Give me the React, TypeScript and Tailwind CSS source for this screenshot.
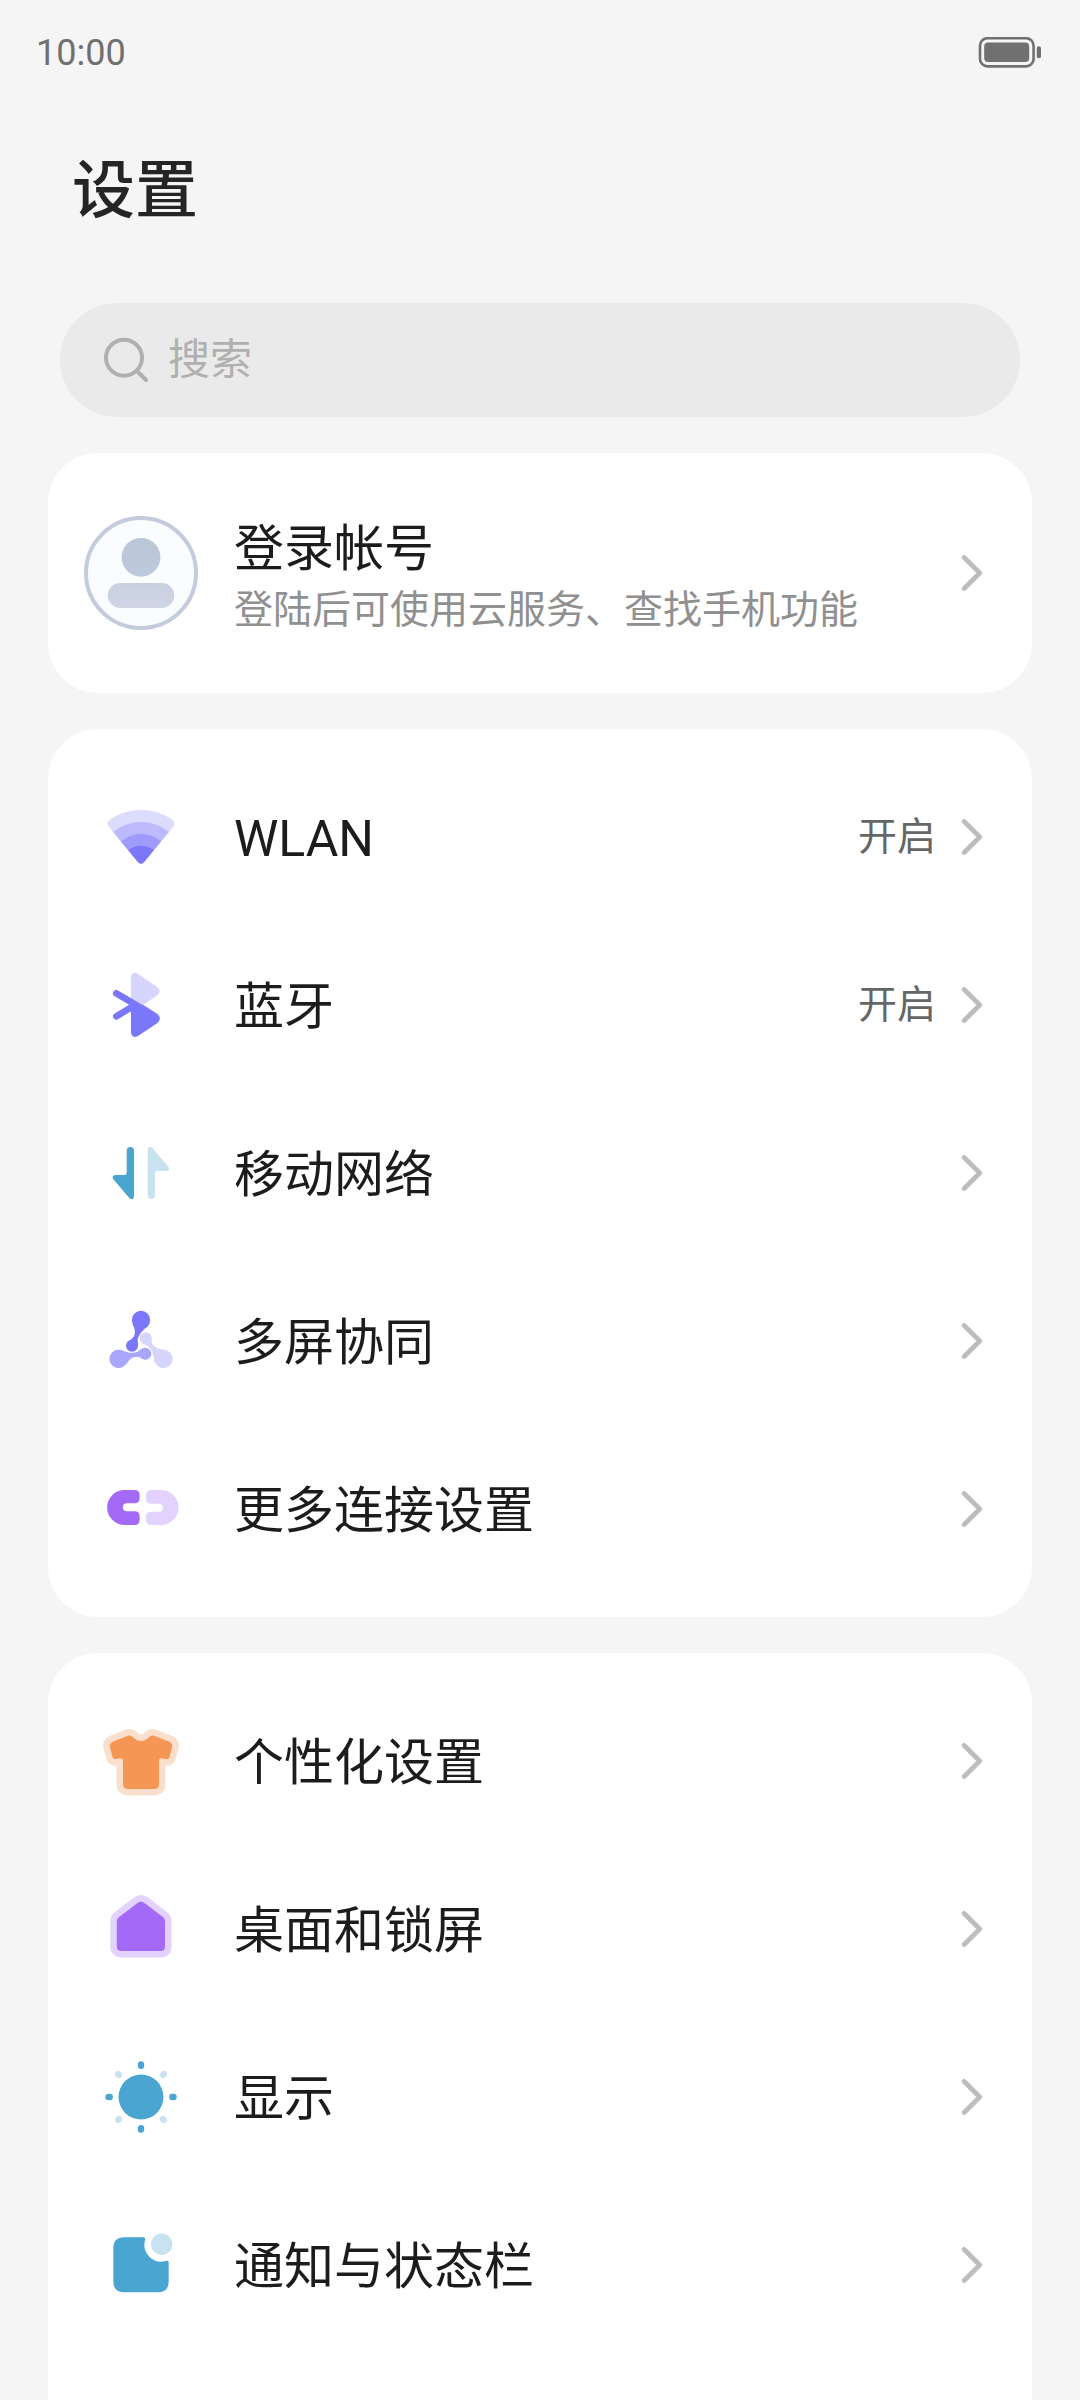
import type { ReactNode } from "react";

const iconClass = "size-[84px]";

function WlanIcon() {
  return (
    <svg viewBox="0 0 84 84" className={iconClass} aria-hidden="true">
      <clipPath id="wlan-fan">
        <path d="M45 66.9 Q42 70 39 66.9 L9.4 31.3 Q7 27.6 10.8 24.5 A55.5 55.5 0 0 1 73.2 24.5 Q77 27.6 74.6 31.3 Z" />
      </clipPath>
      <g clipPath="url(#wlan-fan)">
        <circle cx="42" cy="70.5" r="56" fill="#dcdcff" />
        <circle cx="42" cy="70.5" r="43.5" fill="#bcbafc" />
        <circle cx="42" cy="70.5" r="31.5" fill="#9e9bfb" />
        <circle cx="42" cy="70.5" r="19.8" fill="#7a77fb" />
      </g>
    </svg>
  );
}

function BluetoothIcon() {
  return (
    <svg viewBox="0 0 84 84" className={iconClass} aria-hidden="true">
      <path
        d="M32 14.5 Q32.5 7.5 39 10.8 L58.5 24.3 Q63 28.3 58.5 32 L44.3 42 L32 36 Z"
        fill="#d6d5fe"
      />
      <path
        d="M32 41 L44.3 42.1 L58.5 51 Q63.2 55.5 58.5 60 L39 72.9 Q33 76 32 69.5 Z"
        fill="#7a77fb"
      />
      <path
        d="M17.3 30.3 L42 44.9 M17.3 53.3 L36 42.2"
        stroke="#7a77fb"
        strokeWidth="6.6"
        strokeLinecap="round"
      />
    </svg>
  );
}

function MobileDataIcon() {
  const arrow =
    "M27.7 19.7 A3.65 3.65 0 0 1 35 19.7 V65.5 Q34.5 70 30.5 67.3 L14.5 48.6 Q12 44.5 16.5 44 H25.5 Q27.7 44 27.7 41.5 Z";
  return (
    <svg viewBox="0 0 84 84" className={iconClass} aria-hidden="true">
      <path d={arrow} fill="#4ba5d1" />
      <path d={arrow} fill="#c8e3ef" transform="rotate(180 41.85 42)" />
    </svg>
  );
}

function MultiScreenIcon() {
  const arm = (
    <>
      <circle cx="42" cy="21" r="9.2" />
      <circle cx="33" cy="46.7" r="6" />
      <path d="M33.7 25.5 Q37.5 32.5 34.8 37.6 Q33 40.8 29 42.5 L38.8 48 Q39.2 44 38.6 41 Q39.5 34 49.3 26.7 Z" />
    </>
  );
  return (
    <svg viewBox="0 0 84 84" className={iconClass} aria-hidden="true">
      <g fill="#7a77fb">{arm}</g>
      <g fill="#a9a7fc" transform="rotate(-120 42 46.9)">
        {arm}
      </g>
      <g fill="#d6d5fe" transform="rotate(120 42 46.9)">
        {arm}
      </g>
    </svg>
  );
}

function ConnectionsIcon() {
  const half =
    "M25.6 23 H35.6 Q40.6 23 40.6 28 V31.2 Q40.6 36.2 35.6 36.2 H27.9 A4 4 0 0 0 27.9 44.2 H35.6 Q40.6 44.2 40.6 49.2 V53 Q40.6 58 35.6 58 H25.6 A17.5 17.5 0 0 1 25.6 23 Z";
  return (
    <svg viewBox="0 0 84 84" className={iconClass} aria-hidden="true">
      <path d={half} fill="#a369f7" />
      <path d={half} fill="#e3d2fd" transform="rotate(180 43.85 40.5)" />
    </svg>
  );
}

function ShirtIcon() {
  const shirt =
    "M29 16.8 Q31 16 33 17.5 Q38 22 42 22 Q46 22 51 17.5 Q53 16 55 16.8 L70.5 22.8 Q74 24.6 73 28.6 L70.4 38.3 Q69.4 40.8 66.5 40 L63 39.2 Q60 39 60 41.5 V65 Q60 70 55 70 H29 Q24 70 24 65 V41.5 Q24 39 21 39.2 L17.5 40 Q14.6 40.8 13.6 38.3 L11 28.6 Q10 24.6 13.5 22.8 Z";
  return (
    <svg viewBox="0 0 84 84" className={iconClass} aria-hidden="true">
      <path d={shirt} fill="#fadfcd" stroke="#fadfcd" strokeWidth="13" strokeLinejoin="round" />
      <path d={shirt} fill="#f59655" />
    </svg>
  );
}

function HomeIcon() {
  const house =
    "M38.5 16 Q42 13.3 45.5 16 L64.5 30.6 Q66 32 66 34 V59.5 Q66 64 61.5 64 H22.3 Q17.8 64 17.8 59.5 V34 Q17.8 32 19.5 30.6 Z";
  return (
    <svg viewBox="0 0 84 84" className={iconClass} aria-hidden="true">
      <path d={house} fill="#e3d2fd" stroke="#e3d2fd" strokeWidth="13" strokeLinejoin="round" />
      <path d={house} fill="#a369f7" />
    </svg>
  );
}

function DisplayIcon() {
  return (
    <svg viewBox="0 0 84 84" className={iconClass} aria-hidden="true">
      <circle cx="42" cy="42" r="22.5" fill="#4ba5d1" />
      {[0, 90, 180, 270].map((angle) => (
        <g key={angle} transform={`rotate(${angle} 42 42)`}>
          <rect x="38.8" y="6.3" width="6.4" height="7.6" rx="3.2" fill="#4ba5d1" />
          <ellipse
            cx="42"
            cy="10.2"
            rx="3.2"
            ry="3.8"
            fill="#c8e3ef"
            transform="rotate(45 42 42)"
          />
        </g>
      ))}
    </svg>
  );
}

function NotificationIcon() {
  return (
    <svg viewBox="0 0 84 84" className={iconClass} aria-hidden="true">
      <path
        d="M25.3 14.3 H44.4 Q46.5 14.3 46.2 16.6 A16.9 16.9 0 0 0 67.4 37.8 Q69.7 37.3 69.7 39.6 V58.3 Q69.7 69.3 58.7 69.3 H25.3 Q14.3 69.3 14.3 58.3 V25.3 Q14.3 14.3 25.3 14.3 Z"
        fill="#4ba5d1"
      />
      <circle cx="62.7" cy="21.3" r="10.7" fill="#c8e3ef" />
    </svg>
  );
}

function AvatarIcon() {
  return (
    <svg viewBox="0 0 114 114" className="size-[114px] shrink-0" aria-hidden="true">
      <defs>
        <linearGradient id="avatar-head" x1="0" y1="0" x2="0" y2="1">
          <stop offset="0" stopColor="#bac7d7" />
          <stop offset="1" stopColor="#bec9db" />
        </linearGradient>
        <linearGradient id="avatar-body" x1="0" y1="0" x2="0" y2="1">
          <stop offset="0" stopColor="#c8d0e0" />
          <stop offset="1" stopColor="#d0d5e6" />
        </linearGradient>
      </defs>
      <circle cx="57" cy="57" r="55" fill="#fbfcfe" stroke="#c3cbdd" strokeWidth="4" />
      <circle cx="57" cy="41.3" r="19.4" fill="url(#avatar-head)" />
      <rect x="23.7" y="67" width="66.6" height="25" rx="12.5" fill="url(#avatar-body)" />
    </svg>
  );
}

function BatteryIcon() {
  return (
    <svg viewBox="0 0 66 32" className="h-8 w-[66px]" role="img" aria-label="电池">
      <rect x="2" y="1.2" width="53.6" height="28.2" rx="7.5" fill="none" stroke="#707070" strokeWidth="2.6" />
      <rect x="6.2" y="5.6" width="45" height="19.4" rx="4" fill="#707070" />
      <rect x="58.8" y="9.3" width="4.2" height="12" rx="2" fill="#707070" />
    </svg>
  );
}

function Chevron() {
  return (
    <svg viewBox="0 0 36 36" className="size-9 shrink-0" aria-hidden="true">
      <path
        d="M10.2 2.5 L25.7 18 L10.2 33.5"
        fill="none"
        stroke="#bdbdbd"
        strokeWidth="4.8"
        strokeLinecap="round"
        strokeLinejoin="round"
      />
    </svg>
  );
}

type Item = { label: string; icon: ReactNode; status?: string };

const connectionItems: Item[] = [
  { label: "WLAN", icon: <WlanIcon />, status: "开启" },
  { label: "蓝牙", icon: <BluetoothIcon />, status: "开启" },
  { label: "移动网络", icon: <MobileDataIcon /> },
  { label: "多屏协同", icon: <MultiScreenIcon /> },
  { label: "更多连接设置", icon: <ConnectionsIcon /> },
];

const deviceItems: Item[] = [
  { label: "个性化设置", icon: <ShirtIcon /> },
  { label: "桌面和锁屏", icon: <HomeIcon /> },
  { label: "显示", icon: <DisplayIcon /> },
  { label: "通知与状态栏", icon: <NotificationIcon /> },
];

function SettingsList({ items }: { items: Item[] }) {
  return (
    <ul>
      {items.map((item) => (
        <li key={item.label}>
          <a href="#" className="flex h-[168px] items-center gap-9 pr-[42px] pl-9">
            <span className="flex w-[114px] shrink-0 justify-center">{item.icon}</span>
            <span className="flex-1 pt-1 text-[50px] leading-[70px] text-[#1c1c1c]">{item.label}</span>
            <span className="flex items-center gap-[18px]">
              {item.status && (
                <span className="text-[39px] leading-[52px] text-[#666666]">{item.status}</span>
              )}
              <Chevron />
            </span>
          </a>
        </li>
      ))}
    </ul>
  );
}

export default function App() {
  return (
    <div
      lang="zh-CN"
      className="flex min-h-screen flex-col bg-[#f5f5f5] font-['Roboto','Noto_Sans_CJK_SC',sans-serif]"
    >
      <div className="flex h-[106px] items-center justify-between px-9">
        <time className="text-[36px] leading-[48px] text-[#707070]">10:00</time>
        <BatteryIcon />
      </div>

      <header className="px-[72px] pt-[43px] pb-[70px]">
        <h1 className="text-[63px] leading-[84px] font-medium text-[#252525]">设置</h1>
      </header>

      <main className="flex flex-1 flex-col px-12">
        <label className="mx-3 mb-9 flex h-[114px] items-center gap-[18px] rounded-full bg-[#eaeaea] pr-10 pl-[42px]">
          <svg viewBox="0 0 48 48" className="size-12 shrink-0" aria-hidden="true">
            <g fill="none" stroke="#b0b0b0" strokeWidth="4" strokeLinecap="round">
              <circle cx="22" cy="21.7" r="18" />
              <path d="M35 35 L44 44" />
            </g>
          </svg>
          <input
            type="search"
            aria-label="搜索"
            placeholder="搜索"
            className="min-w-0 flex-1 bg-transparent text-[42px] leading-[60px] text-[#1c1c1c] outline-none placeholder:text-[#b0b0b0]"
          />
        </label>

        <a
          href="#"
          className="mb-9 flex h-60 items-center gap-9 rounded-[50px] bg-white pr-[42px] pl-9"
        >
          <AvatarIcon />
          <span className="flex flex-1 flex-col pt-1">
            <span className="text-[50px] leading-[70px] text-[#1c1c1c]">登录帐号</span>
            <span className="text-[39px] leading-[52px] text-[#909090]">
              登陆后可使用云服务、查找手机功能
            </span>
          </span>
          <Chevron />
        </a>

        <section aria-label="连接" className="mb-9 rounded-[50px] bg-white py-6">
          <SettingsList items={connectionItems} />
        </section>

        <section aria-label="设备" className="flex-1 rounded-t-[50px] bg-white pt-6">
          <SettingsList items={deviceItems} />
        </section>
      </main>
    </div>
  );
}
